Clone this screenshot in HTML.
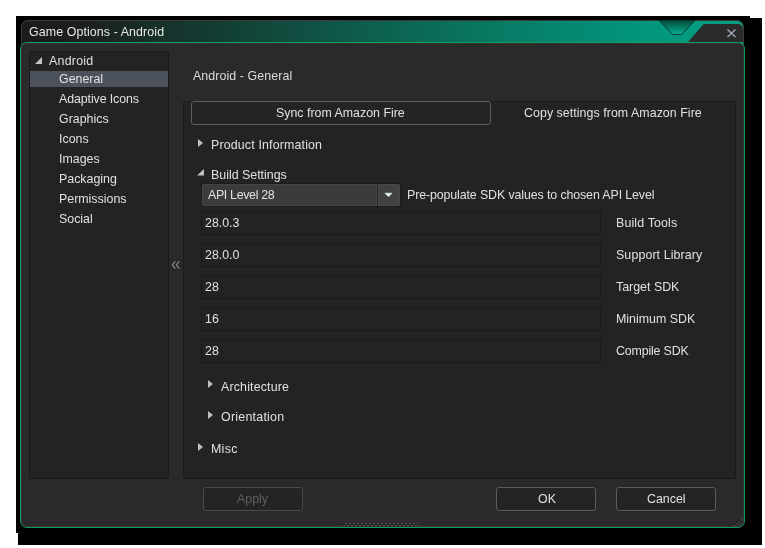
<!DOCTYPE html>
<html><head><meta charset="utf-8">
<style>
*{box-sizing:border-box;margin:0;padding:0}
html,body{width:765px;height:548px;background:#fff;overflow:hidden;position:relative;font-family:"Liberation Sans",sans-serif;font-size:12.4px;color:#e0e0e0}
.a{position:absolute}
.t{position:absolute;white-space:nowrap;line-height:17px;will-change:transform}
.sh1{left:16px;top:16px;width:734px;height:517px;background:#000}
.sh2{left:18px;top:18px;width:744px;height:527px;background:#000}
.title{left:21px;top:20px;width:723px;height:26px;border:1px solid #3b3b3b;border-bottom:none;border-radius:7px 7px 0 0;
 background:linear-gradient(90deg,#1c1c1c 0px,#1c1f1e 60px,#143a31 180px,#0b6a56 400px,#03937a 600px,#04a084 723px)}
.body{left:20px;top:42px;width:725px;height:486px;border:1px solid #099c5a;border-radius:7px;background:#2a2a2a}
.bodyin{left:21px;top:43px;width:723px;height:484px;border:1px solid #3a3333;border-radius:6px}
.panel{background:#232323;border:1px solid #1a1a1a;border-radius:2px}
.btn{border:1px solid #5c5c5c;border-radius:3px;background:#242424}
.fld{border:1px solid #1a1a1a;border-radius:2px;background:#232323}
</style></head><body>
<div class="a sh1"></div>
<div class="a sh2"></div>
<div class="a title"></div>
<div class="t" style="letter-spacing:0.1px;left:29px;top:24px;color:#e6e6e6">Game Options - Android</div>
<!-- notch + close area -->
<svg class="a" style="left:640px;top:19px" width="110" height="26" viewBox="640 19 110 26">
 <defs>
  <linearGradient id="ng" x1="0" y1="0" x2="0" y2="1">
   <stop offset="0" stop-color="#044a3a"/><stop offset="0.85" stop-color="#04a283"/><stop offset="1" stop-color="#04a686"/>
  </linearGradient>
 </defs>
 <polygon points="659,20.5 695,20.5 681.5,34.5 672.8,34.5" fill="url(#ng)" stroke="#0a3a30" stroke-width="1"/>
 <path d="M703.8,24 L737.5,24 Q743,24 743,29.5 L743,42 L688,42 Z" fill="#2b2b2b"/>
 <path d="M727.5,29.5 L735.5,37 M735.5,29.5 L727.5,37" stroke="#a4acba" stroke-width="1.3" fill="none"/>
</svg>
<div class="a body"></div>
<div class="a bodyin"></div>

<!-- left tree panel -->
<div class="a panel" style="left:29px;top:51px;width:140px;height:428px"></div>
<div class="a" style="left:30px;top:71px;width:138px;height:16px;background:#4b525b"></div>
<svg class="a" style="left:34px;top:56px" width="9" height="10"><polygon points="1,8 8,1 8,8" fill="#c4c4c4"/></svg>
<div class="t" style="letter-spacing:0.25px;left:49px;top:53px">Android</div>
<div class="t" style="left:59px;top:71px">General</div>
<div class="t" style="letter-spacing:-0.1px;left:59px;top:91px">Adaptive Icons</div>
<div class="t" style="left:59px;top:111px">Graphics</div>
<div class="t" style="left:59px;top:131px">Icons</div>
<div class="t" style="left:59px;top:151px">Images</div>
<div class="t" style="left:59px;top:171px">Packaging</div>
<div class="t" style="left:59px;top:191px">Permissions</div>
<div class="t" style="left:59px;top:211px">Social</div>

<!-- collapse chevrons -->
<svg class="a" style="left:170px;top:259px" width="12" height="12"><path d="M5.2,2.3 L2.4,6 L5.2,9.7 M9.2,2.3 L6.4,6 L9.2,9.7" stroke="#8e8e8e" stroke-width="1.15" fill="none"/></svg>

<!-- right header -->
<div class="t" style="letter-spacing:0.09px;left:193px;top:68px;color:#dcdcdc">Android - General</div>

<!-- right panel -->
<div class="a panel" style="left:183px;top:101px;width:553px;height:378px"></div>
<div class="a btn" style="left:191px;top:101px;width:300px;height:24px"></div>
<div class="t" style="left:276px;top:105px">Sync from Amazon Fire</div>
<div class="t" style="letter-spacing:0.05px;left:524px;top:105px">Copy settings from Amazon Fire</div>

<svg class="a" style="left:196px;top:137px" width="10" height="12"><polygon points="2,2 7,6 2,10" fill="#c0c0c0"/></svg>
<div class="t" style="letter-spacing:0.16px;left:211px;top:137px">Product Information</div>
<svg class="a" style="left:196px;top:168px" width="10" height="10"><polygon points="1,7.5 8,1 8,7.5" fill="#c0c0c0"/></svg>
<div class="t" style="left:211px;top:167px">Build Settings</div>

<!-- dropdown -->
<div class="a" style="left:201px;top:183px;width:200px;height:24px;background:#1c1c1c;border-radius:3px"></div>
<div class="a" style="left:202px;top:184px;width:175px;height:22px;background:#3b3b3b;border-radius:2px 0 0 2px;box-shadow:inset 0 0 0 1px #444"></div>
<div class="a" style="left:377px;top:184px;width:1px;height:22px;background:#262626"></div>
<div class="a" style="left:378px;top:184px;width:22px;height:22px;background:#414141;border-radius:0 2px 2px 0;box-shadow:inset 0 0 0 1px #494949"></div>
<svg class="a" style="left:383px;top:191px" width="11" height="7"><path d="M2,2.2 L9,2.2 L5.9,5.4 L5.1,5.4 Z" fill="#e0f0ea" stroke="#e0f0ea" stroke-width="0.7" stroke-linejoin="round"/></svg>
<div class="t" style="letter-spacing:-0.33px;left:208px;top:187px">API Level 28</div>
<div class="t" style="letter-spacing:-0.11px;left:407px;top:187px">Pre-populate SDK values to chosen API Level</div>

<!-- fields -->
<div class="a fld" style="left:201px;top:211px;width:400px;height:24px"></div>
<div class="t" style="left:205px;top:215px">28.0.3</div>
<div class="t" style="letter-spacing:0.15px;left:616px;top:215px">Build Tools</div>
<div class="a fld" style="left:201px;top:243px;width:400px;height:24px"></div>
<div class="t" style="left:205px;top:247px">28.0.0</div>
<div class="t" style="letter-spacing:0.11px;left:616px;top:247px">Support Library</div>
<div class="a fld" style="left:201px;top:275px;width:400px;height:24px"></div>
<div class="t" style="left:205px;top:279px">28</div>
<div class="t" style="left:616px;top:279px">Target SDK</div>
<div class="a fld" style="left:201px;top:307px;width:400px;height:24px"></div>
<div class="t" style="left:205px;top:311px">16</div>
<div class="t" style="left:616px;top:311px">Minimum SDK</div>
<div class="a fld" style="left:201px;top:339px;width:400px;height:24px"></div>
<div class="t" style="left:205px;top:343px">28</div>
<div class="t" style="letter-spacing:-0.16px;left:616px;top:343px">Compile SDK</div>

<svg class="a" style="left:206px;top:378px" width="10" height="12"><polygon points="2,2 7,6 2,10" fill="#c0c0c0"/></svg>
<div class="t" style="letter-spacing:0.17px;left:221px;top:379px">Architecture</div>
<svg class="a" style="left:206px;top:409px" width="10" height="12"><polygon points="2,2 7,6 2,10" fill="#c0c0c0"/></svg>
<div class="t" style="letter-spacing:0.25px;left:221px;top:409px">Orientation</div>
<svg class="a" style="left:196px;top:441px" width="10" height="12"><polygon points="2,2 7,6 2,10" fill="#c0c0c0"/></svg>
<div class="t" style="letter-spacing:0.3px;left:211px;top:441px">Misc</div>

<!-- bottom buttons -->
<div class="a btn" style="left:203px;top:487px;width:100px;height:24px;border-color:#4a4a4a"></div>
<div class="t" style="left:237px;top:491px;color:#5e5e5e">Apply</div>
<div class="a btn" style="left:496px;top:487px;width:100px;height:24px"></div>
<div class="t" style="left:538px;top:491px">OK</div>
<div class="a btn" style="left:616px;top:487px;width:100px;height:24px"></div>
<div class="t" style="left:647px;top:491px">Cancel</div>


<!-- bottom grip -->
<div class="a" style="left:343px;top:523px;width:78px;height:1px;background:repeating-linear-gradient(90deg,#262626 0 2px,#505050 2px 4px)"></div>
<div class="a" style="left:343px;top:524px;width:78px;height:1px;background:repeating-linear-gradient(90deg,#1e1e1e 0 2px,#363636 2px 4px)"></div>
<div class="a" style="left:343px;top:525px;width:78px;height:1px;background:repeating-linear-gradient(90deg,#505050 0 2px,#262626 2px 4px)"></div>
<!-- corner grip -->
<svg class="a" style="left:726px;top:508px" width="20" height="20">
 <g fill="#1d1d1d">
  <rect x="12.5" y="11.5" width="2" height="2"/><rect x="10.5" y="13.5" width="2" height="2"/><rect x="14.5" y="13" width="1.5" height="2"/>
  <rect x="8.5" y="15.5" width="2" height="2"/><rect x="12.5" y="15.5" width="2" height="2"/>
 </g>
 <g fill="#505050">
  <rect x="14.5" y="11" width="1.6" height="1.6"/><rect x="12.5" y="13" width="1.6" height="1.6"/><rect x="10.5" y="15" width="1.6" height="1.6"/>
  <rect x="8.5" y="17" width="1.6" height="1.4"/><rect x="14.5" y="15" width="1.6" height="1.6"/><rect x="12.5" y="17" width="1.6" height="1.4"/>
 </g>
</svg>
</body></html>
